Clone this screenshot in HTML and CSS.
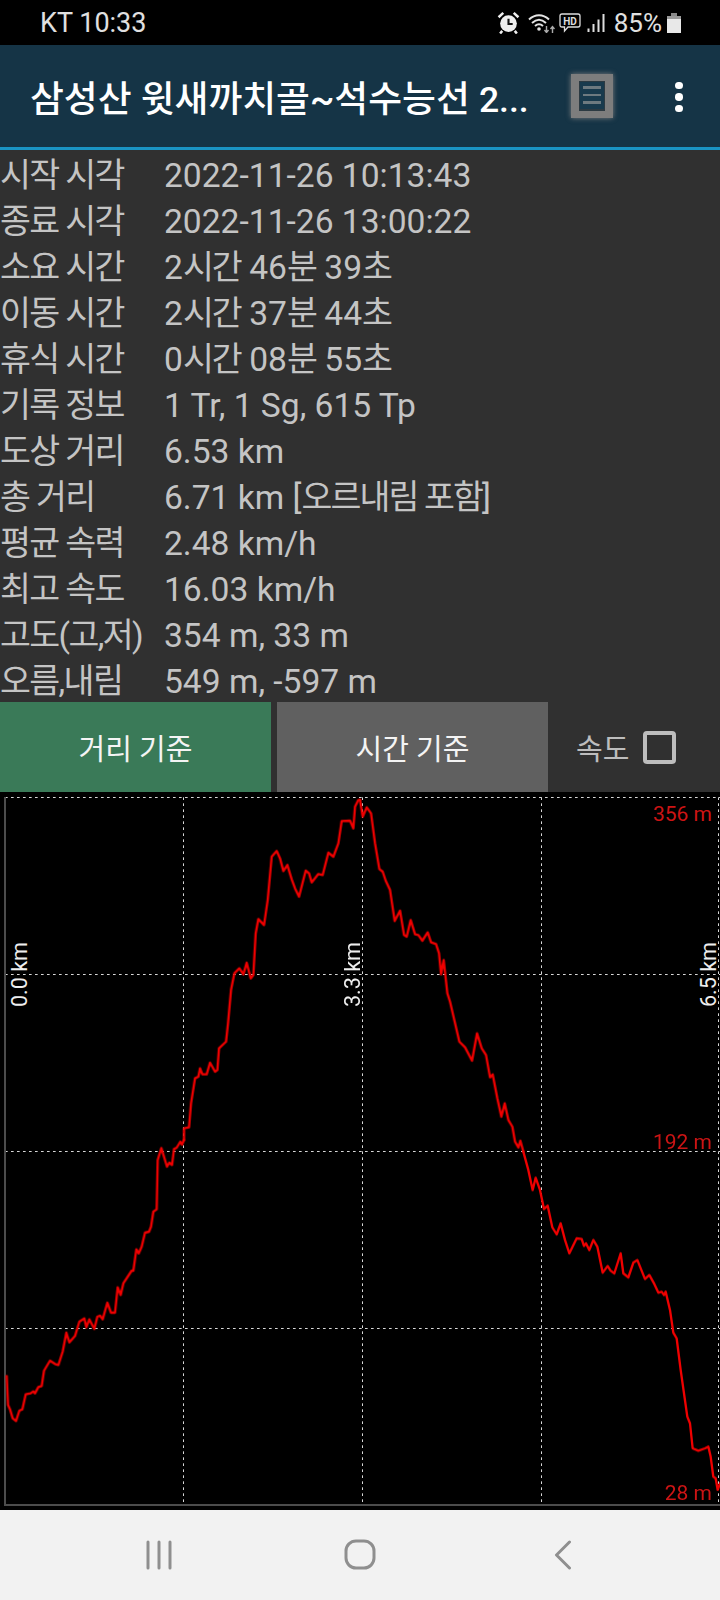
FILE: index.html
```html
<!DOCTYPE html>
<html lang="ko">
<head>
<meta charset="UTF-8" />
<meta name="viewport" content="width=device-width, initial-scale=1" />
<title>트랙 정보</title>
<link rel="stylesheet" href="styles.css">
</head>
<body>
  <div class="status-bar">
    <span class="carrier">KT 10:33</span>
    <div class="status-icons">
      <svg class="ic-alarm" width="23" height="23" viewBox="0 0 22 22">
        <circle cx="11" cy="12" r="8" fill="#eee"/>
        <path d="M11 7.500V12.500H15" fill="none" stroke="#111" stroke-width="2"/>
        <path d="M1.500 6L6 1.800M20.500 6L16 1.800" stroke="#eee" stroke-width="2.400" fill="none"/>
        <path d="M5 19L3 21.500M17 19L19 21.500" stroke="#eee" stroke-width="2.400" fill="none"/>
      </svg>
      <svg class="ic-wifi" width="27" height="20" viewBox="0 0 27 20">
        <path d="M1 6.500C7 .8 15 .8 21 6.500" fill="none" stroke="#e4e4e4" stroke-width="2"/>
        <path d="M4 10C8.500 5.800 13.500 5.800 18 10" fill="none" stroke="#e4e4e4" stroke-width="2"/>
        <path d="M7 13C9.500 10.800 12.500 10.800 15 13" fill="none" stroke="#e4e4e4" stroke-width="2"/>
        <circle cx="11" cy="16" r="1.800" fill="#e4e4e4"/>
        <path d="M18.500 13V19M16.500 17L18.500 19.500L20.500 17" fill="none" stroke="#aaa" stroke-width="1.400"/>
        <path d="M24.500 20V14M22.500 16L24.500 13.500L26.500 16" fill="none" stroke="#aaa" stroke-width="1.400"/>
      </svg>
      <svg class="ic-hd" width="22" height="20" viewBox="0 0 22 20">
        <path d="M3 1H19Q21 1 21 3V12Q21 14 19 14H9L5.500 18V14H3Q1 14 1 12V3Q1 1 3 1Z" fill="none" stroke="#ddd" stroke-width="1.300"/>
        <text x="11" y="11.500" text-anchor="middle" class="hd-text">HD</text>
      </svg>
      <svg class="ic-signal" width="18" height="19" viewBox="0 0 18 19">
        <path d="M1.500 15.500V19M6.500 11V19M11.500 6.500V19M16.500 1V19" stroke="#ddd" stroke-width="2" fill="none"/>
      </svg>
      <span class="battery-text">85%</span>
      <svg class="ic-battery" width="14" height="20" viewBox="0 0 14 20">
        <rect x="4" y="0" width="6" height="3" fill="#888"/>
        <rect x="0" y="3" width="14" height="3" fill="#999"/>
        <rect x="0" y="6" width="14" height="14" fill="#e8e8e8"/>
      </svg>
    </div>
  </div>

  <header class="action-bar">
    <h1 class="title">삼성산 윗새까치골~석수능선 <span class="title-end">2...</span></h1>
    <div class="list-btn">
      <div class="list-inner"><i></i><i></i><i></i></div>
    </div>
    <div class="more-btn"><i></i><i></i><i></i></div>
  </header>

  <div class="info">
    <span class="ko">시작 시각</span><span>2022-11-26 10:13:43</span>
    <span class="ko">종료 시각</span><span>2022-11-26 13:00:22</span>
    <span class="ko">소요 시간</span><span>2<b class="ko">시간</b> 46<b class="ko">분</b> 39<b class="ko">초</b></span>
    <span class="ko">이동 시간</span><span>2<b class="ko">시간</b> 37<b class="ko">분</b> 44<b class="ko">초</b></span>
    <span class="ko">휴식 시간</span><span>0<b class="ko">시간</b> 08<b class="ko">분</b> 55<b class="ko">초</b></span>
    <span class="ko">기록 정보</span><span>1 Tr, 1 Sg, 615 Tp</span>
    <span class="ko">도상 거리</span><span>6.53 km</span>
    <span class="ko">총 거리</span><span>6.71 km [<b class="ko">오르내림 포함</b>]</span>
    <span class="ko">평균 속력</span><span>2.48 km/h</span>
    <span class="ko">최고 속도</span><span>16.03 km/h</span>
    <span class="ko">고도(고,저)</span><span>354 m, 33 m</span>
    <span class="ko">오름,내림</span><span>549 m, -597 m</span>
  </div>

  <div class="controls">
    <button class="tab tab-on">거리 기준</button>
    <button class="tab tab-off">시간 기준</button>
    <label class="speed">속도 <span class="check"></span></label>
  </div>

  <div class="chart">
    <svg class="plot" viewBox="0 0 2160 2154">
      <g class="grid">
        <path d="M15 16.500H2160M15 547.500H2160M15 1078.500H2160M15 1609.500H2160"/>
        <path d="M550.500 16V2139M1087.500 16V2139M1624.500 16V2139M2155.500 16V2139"/>
      </g>
      <path class="axis" d="M15 15V2139H2160"/>
      <g class="line">
        <polyline transform="translate(0,1044)" points="20,708 24,795 30,808 38,835 48,843 58,812 67,808 77,763 92,760 100,754 105,760 115,741 125,738 132,692 150,662 165,672 175,675 188,635 199,578 208,607 225,588 238,545 253,535 259,562 268,538 283,567 292,530 300,527 308,538 322,488 333,518 345,518 353,442 362,465 370,430 395,392 400,392 409,328 416,340 425,320 435,278 447,275 453,260 460,215 470,208 473,60 484,24 501,80 508,68 516,75 522,27 530,23 541,5 546,14 552,0"/>
        <polyline transform="translate(0,-6)" points="552,1050 552,1015 567,1012 573,940 585,865 595,860 600,835 607,853 620,853 630,818 645,845 652,840 657,775 678,755 684,700 693,600 703,550 718,535 730,553 740,518 752,565 760,555 767,430 775,387 792,405 803,330 815,200 830,183 840,205 850,243 862,225 875,268 885,295 897,320 917,242 927,250 935,277 955,252 968,255 985,188 1000,200 1015,160 1025,93 1050,92 1060,115 1065,50 1075,30 1080,30"/>
        <polyline transform="translate(1080,-6)" points="0,30 8,80 20,52 33,70 45,160 58,237 68,245 77,272 90,300 104,393 120,362 132,435 140,440 152,390 165,433 175,435 187,452 203,427 213,457 228,462 237,490 243,553 251,510 262,610 270,635 298,755 315,772 336,812 351,730 365,775 378,795 390,862 398,853 412,925 424,980 434,940 445,990 457,1010 465,1055 475,1072 481,1052 490,1085"/>
        <polyline transform="translate(1080,1044)" points="490,35 505,90 518,150 527,113 540,150 552,207 563,197 577,262 590,283 602,250 615,300 628,340 650,295 665,297 672,318 678,310 688,330 700,300 712,320 728,398 743,378 752,392 763,400 782,340 790,400 805,412 820,368 832,360 855,417 868,405 883,432 895,458 905,455 912,465 917,455 930,510 940,578 950,595 962,690 982,830 990,850 998,925 1015,932 1035,925 1045,920 1052,950 1060,1010 1067,1015 1073,1050 1080,1030"/>
      </g>
    </svg>
    <span class="km km-start">0.0 km</span>
    <span class="km km-mid">3.3 km</span>
    <span class="km km-end">6.5 km</span>
    <span class="alt alt-top">356 m</span>
    <span class="alt alt-mid">192 m</span>
    <span class="alt alt-low">28 m</span>
  </div>

  <nav class="nav-bar">
    <svg class="nav-recents" width="26" height="30" viewBox="0 0 26 30">
      <path d="M2 2V28M13 2V28M24 2V28" fill="none" stroke="#8f8f8f" stroke-width="3" stroke-linecap="round"/>
    </svg>
    <svg class="nav-home" width="32" height="32" viewBox="0 0 32 32">
      <rect x="2" y="2" width="28" height="27" rx="10" fill="none" stroke="#8f8f8f" stroke-width="3"/>
    </svg>
    <svg class="nav-back" width="18" height="30" viewBox="0 0 18 30">
      <path d="M15.500 2L2.500 15L15.500 28" fill="none" stroke="#8f8f8f" stroke-width="3" stroke-linecap="round" stroke-linejoin="round"/>
    </svg>
  </nav>
</body>
</html>
```

FILE: styles.css
```css
* {
  box-sizing: border-box;
}

body {
  margin: 0;
  width: 720px;
  height: 1600px;
  overflow: hidden;
  background: #303030;
  font-family: Roboto, "Noto Sans CJK KR", sans-serif;
}

/* status bar */
.status-bar {
  height: 45px;
  background: #000;
  color: #e0e0e0;
  display: flex;
  align-items: center;
  justify-content: space-between;
  padding: 0 39px 0 40px;
  font-size: 26px;
}

.carrier {
  font-size: 27px;
}

.status-icons {
  display: flex;
  align-items: center;
}

.ic-wifi { margin-left: 8px; }
.ic-hd { margin-left: 4px; }
.ic-signal { margin-left: 6px; }
.battery-text { margin-left: 9px; }
.ic-battery { margin-left: 5px; }

.hd-text {
  font-size: 10px;
  font-weight: 700;
  fill: #ddd;
}

/* action bar */
.action-bar {
  height: 105px;
  background: #153446;
  border-bottom: 3px solid #1a94c4;
  display: flex;
  align-items: center;
  padding-left: 30px;
}

.title {
  margin: 0;
  width: 541px;
  font-size: 36.800px;
  font-weight: 500;
  color: #fff;
  white-space: nowrap;
}

.title-end {
  font-size: 35.500px;
}

.list-btn {
  width: 42px;
  height: 44px;
  padding: 7px 8px;
  margin-top: -1px;
  background: #7d7d7d;
  box-shadow: 0 0 5px #7d7d7d;
}

.list-inner {
  height: 100%;
  background: #183a4d;
  border: 1px solid #2c3a42;
  border-bottom-width: 2px;
  display: flex;
  flex-direction: column;
  justify-content: space-evenly;
  padding: 0 3px;
}

.list-inner i {
  display: block;
  height: 2.500px;
  background: #6d7a80;
}

.more-btn {
  margin-left: 62px;
  margin-top: 2px;
  display: flex;
  flex-direction: column;
  gap: 4px;
}

.more-btn i {
  display: block;
  width: 7.500px;
  height: 7.500px;
  border-radius: 50%;
  background: #fff;
}

/* track info */
.info {
  height: 552px;
  padding-top: 3px;
  display: grid;
  grid-template-columns: 164px 1fr;
  grid-auto-rows: 46px;
  line-height: 46px;
  font-size: 33.600px;
  color: #c4c4c4;
  white-space: nowrap;
}

.info b {
  font-weight: 400;
  letter-spacing: -1.900px;
}

.ko {
  letter-spacing: -1.600px;
}

/* tabs */
.controls {
  height: 90px;
  display: flex;
}

.tab {
  width: 271px;
  border: none;
  padding: 0;
  font-family: inherit;
  font-size: 29px;
  color: #f4f4f4;
}

.tab-on { background: #3a7a58; }

.tab-off {
  background: #606060;
  margin-left: 6px;
}

.speed {
  display: flex;
  align-items: center;
  margin-left: 28px;
  font-size: 29px;
  color: #bdbdbd;
  gap: 14px;
}

.check {
  width: 33px;
  height: 33px;
  border: 4px solid #bdbdbd;
  border-radius: 4px;
}

/* chart */
.chart {
  height: 718px;
  background: #000;
  position: relative;
  overflow: hidden;
}

.plot {
  display: block;
  width: 720px;
  height: 718px;
}

.grid path {
  fill: none;
  stroke: #d8d8d8;
  stroke-width: 3;
  stroke-dasharray: 8 10;
}

.axis {
  fill: none;
  stroke: #4c4c4c;
  stroke-width: 6;
}

.line {
  filter: blur(0.3px);
}

.line polyline {
  fill: none;
  stroke: #f00000;
  stroke-width: 7;
  stroke-linejoin: round;
  stroke-linecap: round;
}

.km {
  position: absolute;
  top: 149px;
  height: 66px;
  writing-mode: vertical-rl;
  transform: rotate(180deg);
  font-size: 21.500px;
  line-height: 20px;
  color: #eee;
  text-align: left;
}

.km-start { left: 10px; }
.km-mid { left: 343px; }
.km-end { left: 699px; }

.alt {
  position: absolute;
  right: 8px;
  font-size: 21px;
  line-height: 24px;
  color: #cc1414;
}

.alt-top { top: 10px; }
.alt-mid { top: 338px; }
.alt-low { top: 689px; }

/* nav bar */
.nav-bar {
  height: 90px;
  background: #f2f2f2;
  display: flex;
  align-items: center;
  padding-left: 146px;
}

.nav-home { margin-left: 172px; }
.nav-back { margin-left: 178px; }
```
